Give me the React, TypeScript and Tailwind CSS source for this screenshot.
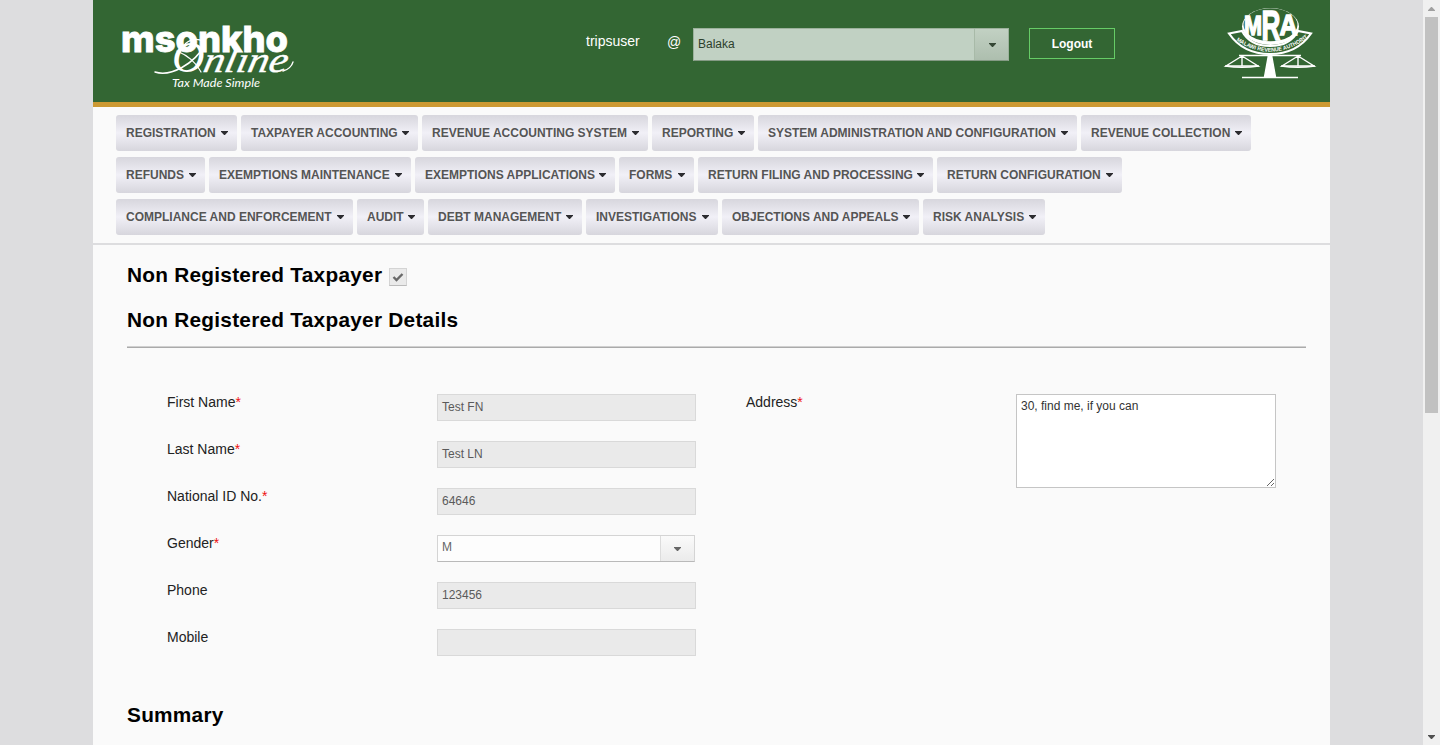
import React from 'react';

const menuRows = [
  [
    ['REGISTRATION', 'w-[121px]'],
    ['TAXPAYER ACCOUNTING', 'w-[177px]'],
    ['REVENUE ACCOUNTING SYSTEM', 'w-[226px]'],
    ['REPORTING', 'w-[102px]'],
    ['SYSTEM ADMINISTRATION AND CONFIGURATION', 'w-[319px]'],
    ['REVENUE COLLECTION', 'w-[170px]'],
  ],
  [
    ['REFUNDS', 'w-[89px]'],
    ['EXEMPTIONS MAINTENANCE', 'w-[202px]'],
    ['EXEMPTIONS APPLICATIONS', 'w-[200px]'],
    ['FORMS', 'w-[75px]'],
    ['RETURN FILING AND PROCESSING', 'w-[235px]'],
    ['RETURN CONFIGURATION', 'w-[185px]'],
  ],
  [
    ['COMPLIANCE AND ENFORCEMENT', 'w-[237px]'],
    ['AUDIT', 'w-[67px]'],
    ['DEBT MANAGEMENT', 'w-[154px]'],
    ['INVESTIGATIONS', 'w-[132px]'],
    ['OBJECTIONS AND APPEALS', 'w-[197px]'],
    ['RISK ANALYSIS', 'w-[122px]'],
  ],
];

function Caret({ className }: { className: string }) {
  return (
    <svg width="7" height="4" viewBox="0 0 7 4" className={className}>
      <path d="M0 0h7v0.800L3.900 4H3.100L0 0.800z" fill="currentColor" />
    </svg>
  );
}

function MsonkhoLogo() {
  return (
    <svg width="180" height="72" viewBox="0 0 180 72" fill="#fff" className="ml-[26px] mt-[22px]">
      <text x="2" y="30" fontFamily="Inter, sans-serif" fontWeight="800" fontSize="36" stroke="#fff" strokeWidth="0.8" textLength="167" lengthAdjust="spacingAndGlyphs">msonkho</text>
      <g fill="none" stroke="#fff" strokeLinecap="round">
        <path d="M36 50C52 55 75 42 86 23" strokeWidth="1.5" />
        <path d="M58 29C70 34 78 42 82 50" strokeWidth="1.2" />
        <path d="M64 26C66 19 76 15 84 19" strokeWidth="1.4" />
        <path d="M164 49C169 48 173 44 174 40" strokeWidth="1.3" />
      </g>
      <text x="53" y="50" fontFamily="Liberation Serif" fontStyle="italic" fontSize="45">O</text>
      <text transform="translate(83 50) skewX(-12)" fontFamily="Liberation Serif" fontStyle="italic" fontSize="36" stroke="#fff" strokeWidth="0.400" textLength="84" lengthAdjust="spacingAndGlyphs">nline</text>
      <text x="53" y="64.500" fontFamily="Lato" fontStyle="italic" fontSize="11" textLength="88" lengthAdjust="spacingAndGlyphs">Tax Made Simple</text>
    </svg>
  );
}

function AuthorityLogo() {
  return (
    <svg width="96" height="74" viewBox="0 0 96 74" className="mr-[12px] mt-[6px]">
      <defs>
        <path id="motto" d="M10 31.500Q48 60 86 31.500" />
      </defs>
      <path d="M7 27.500L20 25Q28 40 48 40Q68 40 76 25L89 27.500Q75 48 48 48Q21 48 7 27.500Z" fill="#336633" stroke="#fff" strokeWidth="2.200" />
      <ellipse cx="48.500" cy="20.500" rx="28.500" ry="18.500" fill="#fff" />
      <ellipse cx="48.500" cy="18.800" rx="27" ry="16.500" fill="#336633" />
      <g fontFamily="Liberation Sans" fontWeight="700" fill="#fff" stroke="#fff" strokeWidth="1.400">
        <text x="22" y="29" fontSize="27" textLength="18" lengthAdjust="spacingAndGlyphs">M</text>
        <text x="39.500" y="33.500" fontSize="42" textLength="19" lengthAdjust="spacingAndGlyphs">R</text>
        <text x="57.500" y="29" fontSize="29" textLength="18" lengthAdjust="spacingAndGlyphs">A</text>
      </g>
      <text fontFamily="Liberation Sans" fontWeight="700" fontSize="5.600" fill="#fff">
        <textPath href="#motto" startOffset="5" textLength="81" lengthAdjust="spacingAndGlyphs">MALAWI REVENUE AUTHORITY</textPath>
      </text>
      <path d="M17 49.500H79M46.500 49L42.500 71H53.500L49.500 49ZM20 71.500H76" fill="#fff" stroke="#fff" strokeWidth="1.400" />
      <path d="M20 50L4 60H36ZM20 50V60M76 50L60 60H92ZM76 50V60" fill="none" stroke="#fff" strokeWidth="1.400" />
      <path d="M3 60Q20 62.500 37 60M59 60Q76 62.500 93 60" fill="none" stroke="#fff" strokeWidth="1.400" />
    </svg>
  );
}

function Label({ text, required }: { text: string; required?: boolean }) {
  return (
    <div className="w-[270px] shrink-0 text-[14px] leading-4 text-[#222]">
      {text}
      {required && <span className="text-[#ee1111]">*</span>}
    </div>
  );
}

function Field({ label, value, required }: { label: string; value: string; required?: boolean }) {
  return (
    <div className="flex h-[47px]">
      <Label text={label} required={required} />
      <div className="h-[27px] w-[259px] border border-[#d9d9d9] bg-[#eaeaea] px-1 text-[12px] leading-[25px] text-[#5a5a5a]">{value}</div>
    </div>
  );
}

export default function App() {
  return (
    <div className="flex h-[745px] overflow-hidden bg-[#dddddf] pl-[93px] font-['Liberation_Sans',sans-serif]">
      <div className="flex w-[1237px] shrink-0 flex-col bg-[#fafafa]">
        <header className="flex h-[107px] shrink-0 items-start border-b-[5px] border-[#cc9933] bg-[#336633]">
          <MsonkhoLogo />
          <div className="ml-[287px] mt-[33px] w-[81px] text-[14px] leading-4 text-white">tripsuser</div>
          <div className="mt-[34px] w-[26px] text-[14px] leading-4 text-white">@</div>
          <div className="mt-[28px] flex h-[33px] w-[316px] border border-[#9cb19c] border-b-[#849a84] bg-[#c1d1c3]">
            <div className="flex-1 px-1 text-[12px] leading-[31px] text-[#2c402c]">Balaka</div>
            <div className="flex w-[34px] items-center justify-center border-l border-[#a8baa8] bg-linear-to-b from-[#c2d1c3] to-[#adbeae] pl-0.5 text-[#354735]">
              <Caret className="" />
            </div>
          </div>
          <button className="ml-5 mt-[28px] h-[31px] w-[86px] border border-[#66cc66] text-[12px] font-bold text-white">Logout</button>
          <div className="flex-1" />
          <AuthorityLogo />
        </header>

        <nav className="flex h-[138px] shrink-0 flex-col gap-1.5 border-b-2 border-[#dddddf] pl-[23px] pt-2">
          {menuRows.map((row, i) => (
            <div key={i} className="flex gap-1">
              {row.map(([name, width]) => (
                <div key={name} className={`flex h-9 items-center justify-between rounded-[3px] bg-linear-to-b from-[#d7d6dd] via-[#f1f0f7] to-[#d7d6dd] pl-2.5 pr-[9px] text-[12px] font-bold whitespace-nowrap text-[#555] ${width}`}>
                  <span>{name}</span>
                  <Caret className="text-[#2c2c30]" />
                </div>
              ))}
            </div>
          ))}
        </nav>

        <main className="pl-[34px] pr-6 pt-[18px]">
          <h1 className="flex h-[45px] items-start text-[20.8px] leading-6 font-bold tracking-[0.26px] text-black">
            <span className="w-[262px]">Non Registered Taxpayer</span>
            <span className="mt-[5px] flex h-[18px] w-[18px] items-center justify-center border border-[#d4d4d4] border-b-[#bbb] bg-[#eaeaea]">
              <svg width="12" height="10" viewBox="0 0 12 10" fill="none" stroke="#696969" strokeWidth="2.4"><path d="M1.500 5L4.500 8L10.500 2" /></svg>
            </span>
          </h1>
          <h2 className="text-[20.8px] leading-6 font-bold tracking-[0.26px] text-black">Non Registered Taxpayer Details</h2>
          <div className="mt-3.5 h-0.5 border-t border-b border-t-[#d0d0d0] border-b-[#aaa]" />
          <div className="flex h-[345px] pl-10 pt-[46px]">
            <div className="w-[579px]">
              <Field label="First Name" value="Test FN" required />
              <Field label="Last Name" value="Test LN" required />
              <Field label="National ID No." value="64646" required />
              <div className="flex h-[47px]">
                <Label text="Gender" required />
                <div className="flex h-[27px] w-[258px] border border-[#d4d4d4] border-b-[#b9b9b9] bg-[#fdfdfd]">
                  <div className="flex-1 px-1 text-[12px] leading-[23px] text-[#666]">M</div>
                  <div className="flex w-[34px] items-center justify-center border-l border-[#dcdcdc] bg-linear-to-b from-[#fafafa] to-[#ebebeb] text-[#666]"><Caret className="" /></div>
                </div>
              </div>
              <Field label="Phone" value="123456" />
              <Field label="Mobile" value="" />
            </div>
            <div className="flex">
              <Label text="Address" required />
              <textarea className="block h-[94px] w-[260px] resize border border-[#c5c5c5] bg-white px-1 py-1 text-[12px] leading-[15px] text-[#333] outline-none" defaultValue="30, find me, if you can" />
            </div>
          </div>
          <h2 className="pt-2.5 text-[20.8px] leading-6 font-bold tracking-[0.26px] text-black">Summary</h2>
        </main>
      </div>
      <div className="w-[93px] shrink-0" />
      <div className="flex w-[17px] shrink-0 flex-col items-center bg-[#f0f0f0]">
        <div className="flex h-[17px] items-center text-[#a0a0a0]"><Caret className="rotate-180" /></div>
        <div className="h-[396px] w-[13px] bg-[#c1c1c1]" />
        <div className="flex-1" />
        <div className="flex h-[17px] items-center text-[#505050]"><Caret className="" /></div>
      </div>
    </div>
  );
}
